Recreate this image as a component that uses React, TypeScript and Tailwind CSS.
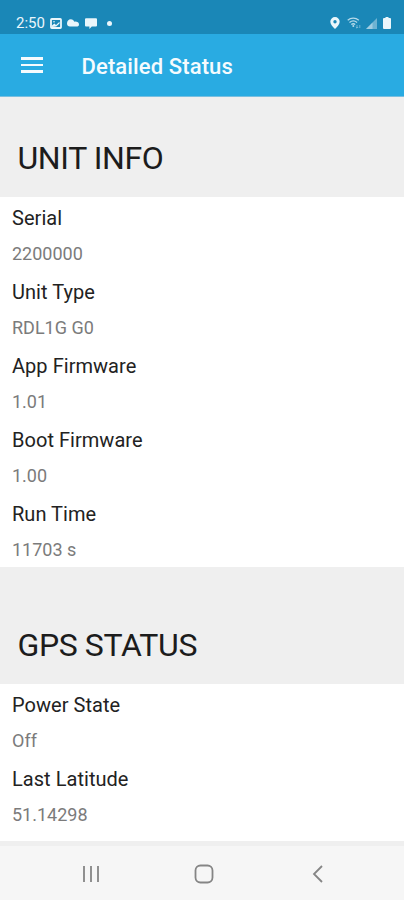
interface StatusItem {
  label: string;
  value: string;
}

const unitInfo: StatusItem[] = [
  { label: "Serial", value: "2200000" },
  { label: "Unit Type", value: "RDL1G G0" },
  { label: "App Firmware", value: "1.01" },
  { label: "Boot Firmware", value: "1.00" },
  { label: "Run Time", value: "11703 s" },
];

const gpsStatus: StatusItem[] = [
  { label: "Power State", value: "Off" },
  { label: "Last Latitude", value: "51.14298" },
];

function StatusBar() {
  return (
    <div className="flex h-[34px] shrink-0 items-end justify-between bg-[#1a87b7] pr-[13px] pb-[3px] pl-4 text-[#eaf6fb]">
      <div className="flex h-4 items-center">
        <span className="w-[30px] text-[15px] leading-4 whitespace-nowrap">2:50</span>
        <svg className="ml-1 h-[11px] w-3" viewBox="0 0 12 11" fill="none">
          <rect x="1" y="1" width="10" height="9" rx="0.8" stroke="currentColor" strokeWidth="1.8" />
          <path d="M2 9V7.6L4.4 5.6 6 7 9.5 3.8V5.6L6.2 8.6Z" fill="currentColor" />
          <circle cx="4" cy="3.8" r="0.8" fill="currentColor" />
        </svg>
        <svg className="ml-[5px] h-2 w-3" viewBox="0 0 12 8" fill="currentColor">
          <path d="M3 7.6C1.2 7.6 0 6.2 0 4.5 0 1.9 1.6.2 3.8.2 5.6.2 6.8 1.3 7.2 2.7 9.8 2.3 12 3.4 12 5.4 12 6.8 11 7.6 9.6 7.6Z" />
        </svg>
        <svg className="ml-[6px] h-[11px] w-3" viewBox="0 0 12 11" fill="currentColor">
          <path d="M1 .2H11Q12 .2 12 1.2V7.6Q12 8.6 11 8.6H6.8L4.4 11V8.6H1Q0 8.6 0 7.6V1.2Q0 .2 1 .2Z" />
        </svg>
        <span className="ml-[10px] size-[5px] rounded-full bg-current" />
      </div>
      <div className="flex h-4 items-center">
        <svg className="h-3 w-[10px]" viewBox="0 0 10 12">
          <path
            fill="currentColor"
            fillRule="evenodd"
            d="M5 0A4.7 4.7 0 0 0 .3 4.7C.3 7.6 3.2 9.8 5 12 6.8 9.8 9.7 7.6 9.7 4.7A4.7 4.7 0 0 0 5 0ZM5 3A1.7 1.7 0 1 1 5 6.4 1.7 1.7 0 0 1 5 3Z"
          />
        </svg>
        <svg className="ml-[7px] h-3 w-[14px]" viewBox="0 0 14 12" fill="none" stroke="currentColor" opacity="0.75">
          <path d="M.7 3.2C3.9.5 8.6.5 11.8 3.2M2.5 5.5C4.8 3.6 7.8 3.6 10.1 5.5M4.3 7.5C5.5 6.6 7.1 6.6 8.2 7.5" strokeWidth="1.3" />
          <circle cx="6.3" cy="9" r="1" fill="currentColor" stroke="none" />
          <path d="M10 8V11M8.8 10 10 11.2 11.2 10M12.8 11V8" strokeWidth="0.8" opacity="0.7" />
        </svg>
        <svg className="ml-[5px] h-[11px] w-[11px]" viewBox="0 0 11 11" fill="currentColor">
          <path d="M0 11 11 0V11Z" opacity="0.4" />
          <path d="M0 11 6.5 4.5V11Z" opacity="0.4" />
        </svg>
        <svg className="ml-[6px] h-3 w-2" viewBox="0 0 8 12" fill="currentColor">
          <path d="M2.5 0H5.5V1H7Q8 1 8 2V11Q8 12 7 12H1Q0 12 0 11V2Q0 1 1 1H2.5Z" />
        </svg>
      </div>
    </div>
  );
}

function AppBar() {
  return (
    <header className="flex h-[63px] shrink-0 items-center border-b border-[#78bfe0] bg-[#29abe2] pl-[21px] text-[#f5fbfe]">
      <button type="button" aria-label="Open menu" className="flex w-[22px] flex-col gap-1">
        <span className="h-[2.5px] bg-current" />
        <span className="h-[2.5px] bg-current" />
        <span className="h-[2.5px] bg-current" />
      </button>
      <h1 className="ml-[38.5px] pt-[3px] text-[22px] leading-7 font-medium tracking-[0.12px]">Detailed Status</h1>
    </header>
  );
}

function Section({ title, items, first }: { title: string; items: StatusItem[]; first?: boolean }) {
  return (
    <section>
      <h2
        className={`flex items-end pb-[19px] pl-[17.5px] text-[32px] leading-10 tracking-[-0.4px] text-[#1c1c1c] ${first ? "h-[100px]" : "h-[117px]"}`}
      >
        {title}
      </h2>
      <dl className="bg-white pl-3">
        {items.map((item) => (
          <div key={item.label} className="h-[74px] pt-2">
            <dt className="text-[20px] leading-[26px] tracking-[0.04px] text-[#222]">{item.label}</dt>
            <dd className="mt-[11px] text-[18px] leading-6 text-[#7b7b7b]">{item.value}</dd>
          </div>
        ))}
      </dl>
    </section>
  );
}

function NavigationBar() {
  return (
    <nav className="flex h-[54px] shrink-0 items-center justify-between bg-[#f6f6f6] pt-[2px] pr-[80px] pl-[82px] text-[#858585]">
      <svg className="h-5 w-[18px]" viewBox="0 0 18 20" stroke="currentColor" strokeWidth="1.8">
        <path d="M2 2V18M9 2V18M16 2V18" />
      </svg>
      <svg className="mr-1 size-5" viewBox="0 0 20 20" fill="none" stroke="currentColor" strokeWidth="1.8">
        <rect x="1.5" y="1.5" width="17" height="17" rx="5" />
      </svg>
      <svg className="h-5 w-3" viewBox="0 0 12 20" fill="none" stroke="currentColor" strokeWidth="1.8">
        <path d="M10 2 2 10 10 18" />
      </svg>
    </nav>
  );
}

export default function App() {
  return (
    <div className="flex h-[900px] w-[404px] flex-col overflow-hidden bg-[#efefef] font-['Roboto',sans-serif]">
      <StatusBar />
      <AppBar />
      <main className="min-h-0 flex-1 overflow-hidden">
        <Section title="UNIT INFO" items={unitInfo} first />
        <Section title="GPS STATUS" items={gpsStatus} />
        <div className="h-[9px] bg-white" />
      </main>
      <NavigationBar />
    </div>
  );
}
